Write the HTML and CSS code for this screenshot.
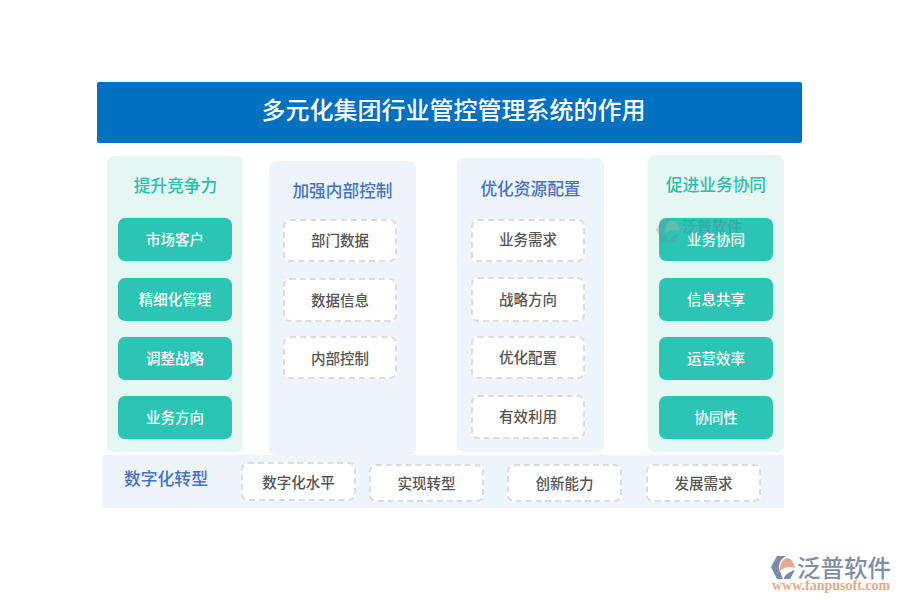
FILE: index.html
```html
<!DOCTYPE html>
<html lang="zh">
<head>
<meta charset="utf-8">
<title>多元化集团行业管控管理系统的作用</title>
<link rel="stylesheet" href="styles.css">
</head>
<body>
<main class="diagram">
  <h1 class="banner">多元化集团行业管控管理系统的作用</h1>
  <div class="columns">
    <section class="col col-a teal">
      <h2 class="col-title">提升竞争力</h2>
      <div class="chip solid">市场客户</div>
      <div class="chip solid">精细化管理</div>
      <div class="chip solid">调整战略</div>
      <div class="chip solid">业务方向</div>
    </section>
    <section class="col col-b blue">
      <h2 class="col-title">加强内部控制</h2>
      <div class="chip dashed">部门数据</div>
      <div class="chip dashed">数据信息</div>
      <div class="chip dashed">内部控制</div>
    </section>
    <section class="col col-c blue">
      <h2 class="col-title">优化资源配置</h2>
      <div class="chip dashed">业务需求</div>
      <div class="chip dashed">战略方向</div>
      <div class="chip dashed">优化配置</div>
      <div class="chip dashed">有效利用</div>
    </section>
    <section class="col col-d teal">
      <h2 class="col-title">促进业务协同</h2>
      <div class="chip solid">业务协同</div>
      <div class="chip solid">信息共享</div>
      <div class="chip solid">运营效率</div>
      <div class="chip solid">协同性</div>
      <div class="watermark">
        <svg class="watermark-icon" viewBox="0 0 26 26" aria-hidden="true">
          <path d="M7 2 L16 2 C11 5 8 10 9 15 L13 25 L7 25 L1 13 Z" fill="#7b8ba5"/>
          <path d="M10 17 C10 9 13 4 18 4 C22 5 24 9 25 14 C20 12 14 13 10 17 Z" fill="#e8a98a"/>
          <path d="M14 25 C14 21 19 18 25 16 L20 25 Z" fill="#7b8ba5"/>
        </svg>
        <span class="watermark-text">泛普软件</span>
      </div>
    </section>
  </div>
  <section class="band">
    <h2 class="band-title">数字化转型</h2>
    <div class="chip dashed band-chip first">数字化水平</div>
    <div class="chip dashed band-chip second">实现转型</div>
    <div class="chip dashed band-chip third">创新能力</div>
    <div class="chip dashed band-chip fourth">发展需求</div>
  </section>
</main>
<aside class="logo">
  <svg class="logo-icon" viewBox="0 0 26 26" aria-hidden="true">
    <path d="M7 2 L16 2 C11 5 8 10 9 15 L13 25 L7 25 L1 13 Z" fill="#7b8ba5"/>
    <path d="M10 17 C10 9 13 4 18 4 C22 5 24 9 25 14 C20 12 14 13 10 17 Z" fill="#e8a98a"/>
    <path d="M14 25 C14 21 19 18 25 16 L20 25 Z" fill="#7b8ba5"/>
  </svg>
  <div class="logo-name">泛普软件</div>
  <div class="logo-url">www.fanpusoft.com</div>
</aside>
</body>
</html>
```
FILE: styles.css
```css
* { box-sizing: border-box; }
html, body { margin: 0; padding: 0; }
body {
  width: 900px;
  height: 600px;
  overflow: hidden;
  background: #fff;
  position: relative;
  font-family: "Noto Sans CJK SC", "Noto Sans", sans-serif;
}
.diagram { width: 705px; margin: 0 0 0 97px; padding-top: 82px; }
.banner {
  margin: 0;
  height: 61px;
  padding-left: 8px;
  background: #0070c0;
  border-radius: 2px;
  color: #fff;
  font-size: 24px;
  font-weight: 500;
  line-height: 54px;
  text-align: center;
}
.columns { display: flex; align-items: flex-start; height: 312px; }
.col { position: relative; display: flex; flex-direction: column; border-radius: 7px; }
.col-a { width: 136px; height: 296px; margin: 13px 0 0 10px; padding: 0 11px; }
.col-b { width: 147px; height: 294px; margin: 18px 0 0 26px; padding: 0 19px 0 14px; }
.col-c { width: 147px; height: 294px; margin: 15px 0 0 41px; padding: 0 19px 0 14px; }
.col-d { width: 136px; height: 297px; margin: 12px 0 0 44px; padding: 0 11px; }
.teal { background: #e6f6f3; }
.blue { background: #edf4fb; }
.col-title {
  flex: none;
  margin: 0;
  height: 62px;
  padding-top: 18px;
  font-size: 16.7px;
  font-weight: 500;
  line-height: 23px;
  text-align: center;
}
.col-a .col-title { padding-left: 1px; }
.col-b .col-title { height: 58px; margin-right: -5px; }
.col-c .col-title { height: 61px; padding-top: 19px; margin-right: -5px; }
.col-d .col-title { height: 63px; padding-top: 18px; }
.teal .col-title { color: #2dbdaf; }
.blue .col-title { color: #4472c4; }
.chip {
  flex: none;
  height: 43px;
  margin-bottom: 16px;
  border-radius: 7px;
  font-size: 14.5px;
  font-weight: 500;
  line-height: 41px;
  text-align: center;
}
.col-a .chip:nth-of-type(1), .col-d .chip:nth-of-type(1) { margin-bottom: 17px; }
.col-b .chip:nth-of-type(1) { line-height: 37px; }
.col-b .chip:nth-of-type(2) { height: 44px; margin-bottom: 14px; }
.col-c .chip:nth-of-type(1) { margin-bottom: 15px; line-height: 35px; }
.col-c .chip:nth-of-type(2) { height: 45px; margin-bottom: 14px; }
.col-c .chip:nth-of-type(3) { line-height: 37px; }
.col-c .chip:nth-of-type(4) { height: 44px; line-height: 37px; }
.solid { position: relative; z-index: 0; background: #2cc4b4; color: #fff; }
.dashed {
  background: #fff;
  border: 2px dashed #dcdcdc;
  color: #555;
  line-height: 39px;
}
.band {
  display: flex;
  align-items: flex-start;
  width: 682px;
  height: 53px;
  margin-left: 5px;
  background: #edf4fb;
  border-radius: 2px;
}
.band-title {
  flex: none;
  width: 84px;
  margin: 12px 0 0 22px;
  color: #4472c4;
  font-size: 16.8px;
  font-weight: 500;
  line-height: 23px;
}
.band-chip { width: 115px; height: 38px; margin: 9px 0 0 0; line-height: 34px; }
.band-chip.first { height: 39px; margin: 7px 0 0 33px; line-height: 36px; }
.band-chip.second { margin-left: 13px; }
.band-chip.third { margin-left: 23px; }
.band-chip.fourth { margin-left: 24px; }
.watermark {
  position: absolute;
  left: 7px;
  top: 62px;
  display: flex;
  align-items: center;
  gap: 1px;
  opacity: .32;
  z-index: 1;
  pointer-events: none;
}
.watermark-icon { width: 26px; height: 26px; }
.watermark-text { color: #5d6f8c; font-size: 15px; font-weight: 500; line-height: 20px; margin-top: -8px; }
.logo { position: absolute; left: 770px; top: 553px; width: 122px; height: 40px; }
.logo-icon { position: absolute; left: 0; top: 1px; width: 26px; height: 26px; }
.logo-name {
  position: absolute;
  left: 27px;
  top: 2px;
  color: #7f8ea8;
  font-size: 23.5px;
  font-weight: 500;
  line-height: 24px;
  white-space: nowrap;
}
.logo-url {
  position: absolute;
  left: 2px;
  top: 26px;
  color: #e8a98a;
  font-family: "Liberation Serif", serif;
  font-size: 14px;
  font-weight: 700;
  line-height: 13px;
  white-space: nowrap;
}
```
